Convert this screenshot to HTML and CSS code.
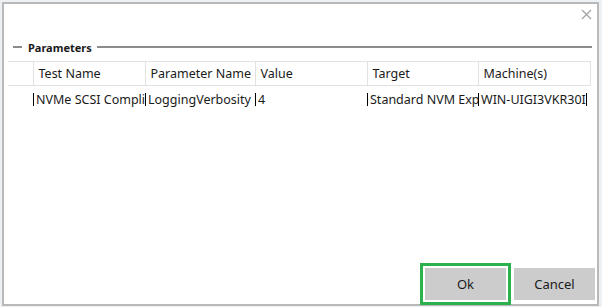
FILE: index.html
```html
<!DOCTYPE html>
<html lang="en">
<head>
    <meta charset="UTF-8">
    <title>Parameters</title>
    <link rel="stylesheet" href="styles.css">
</head>
<body>
    <div class="dialog">
        <div class="titlebar">
            <button class="close-btn" title="Close">
                <svg width="11" height="11" viewBox="0 0 11 11">
                    <path d="M1 1 L10 10 M10 1 L1 10" stroke="#a3a3a3" stroke-width="1.3" fill="none"/>
                </svg>
            </button>
        </div>

        <div class="group-header">
            <span class="rule short"></span>
            <span class="group-title">Parameters</span>
            <span class="rule long"></span>
        </div>

        <table class="grid">
            <colgroup>
                <col class="c-row">
                <col class="c-test">
                <col class="c-param">
                <col class="c-value">
                <col class="c-target">
                <col class="c-machine">
            </colgroup>
            <thead>
                <tr>
                    <th></th>
                    <th>Test Name</th>
                    <th>Parameter Name</th>
                    <th>Value</th>
                    <th>Target</th>
                    <th>Machine(s)</th>
                </tr>
            </thead>
            <tbody>
                <tr>
                    <td></td>
                    <td><div class="cell">NVMe SCSI Compliance</div></td>
                    <td><div class="cell">LoggingVerbosity</div></td>
                    <td><div class="cell">4</div></td>
                    <td><div class="cell">Standard NVM Express Controller</div></td>
                    <td><div class="cell last">WIN-UIGI3VKR30I</div></td>
                </tr>
            </tbody>
        </table>

        <div class="spacer"></div>

        <div class="actions">
            <button class="btn ok">Ok</button>
            <button class="btn">Cancel</button>
        </div>
    </div>
</body>
</html>
```

FILE: styles.css
```css
html, body {
    margin: 0;
    height: 100%;
}
body {
    font-family: "Noto Sans", "Open Sans", sans-serif;
    font-size: 12.5px;
    color: #1a1a1a;
    background: #eef1f4;
    padding: 2px 3px 1px 2px;
    box-sizing: border-box;
    overflow: hidden;
}
.dialog {
    height: 100%;
    box-sizing: border-box;
    background: #fff;
    border: 2px solid #b9b9b9;
    display: flex;
    flex-direction: column;
}
.titlebar {
    height: 36px;
    display: flex;
    justify-content: flex-end;
    align-items: flex-start;
}
.close-btn {
    margin: 4px 5px 0 0;
    padding: 0;
    border: none;
    background: none;
    width: 12px;
    height: 12px;
}
.group-header {
    display: flex;
    align-items: center;
    height: 14px;
    padding: 0 5px 0 9px;
}
.rule {
    height: 2px;
    background: #8c8c8c;
}
.rule.short {
    width: 9px;
}
.rule.long {
    flex: 1;
}
.group-title {
    font-weight: bold;
    font-size: 11px;
    padding: 0 5px 0 6px;
}
.grid {
    margin: 7px 0 0 4px;
    border-collapse: collapse;
    table-layout: fixed;
    width: 582px;
}
.c-row { width: 25px; }
.c-test { width: 112px; }
.c-param { width: 110px; }
.c-value { width: 112px; }
.c-target { width: 111px; }
.c-machine { width: 112px; }
.grid th {
    height: 23px;
    padding: 0 0 0 5px;
    text-align: left;
    font-weight: normal;
    white-space: nowrap;
    overflow: hidden;
    border: 1px solid #e2e2e2;
}
.grid th:first-child {
    border-left: none;
}
.grid td {
    height: 27px;
    padding: 0;
    white-space: nowrap;
    overflow-x: clip;
}
.cell {
    height: 13px;
    line-height: 13px;
    border-left: 1px solid #000;
    padding-left: 2px;
    overflow-x: clip;
    overflow-y: visible;
    white-space: nowrap;
}
.cell.last {
    width: 105px;
    border-right: 1px solid #000;
}
.spacer {
    flex: 1;
}
.actions {
    display: flex;
    justify-content: flex-end;
    gap: 8px;
    padding: 0 2px 4px 0;
}
.btn {
    font-family: inherit;
    font-size: 13px;
    color: #1a1a1a;
    width: 81px;
    height: 32px;
    border: none;
    background: #cccccc;
}
.btn.ok {
    outline: 3px solid #2bb14e;
    outline-offset: 2px;
}
```
